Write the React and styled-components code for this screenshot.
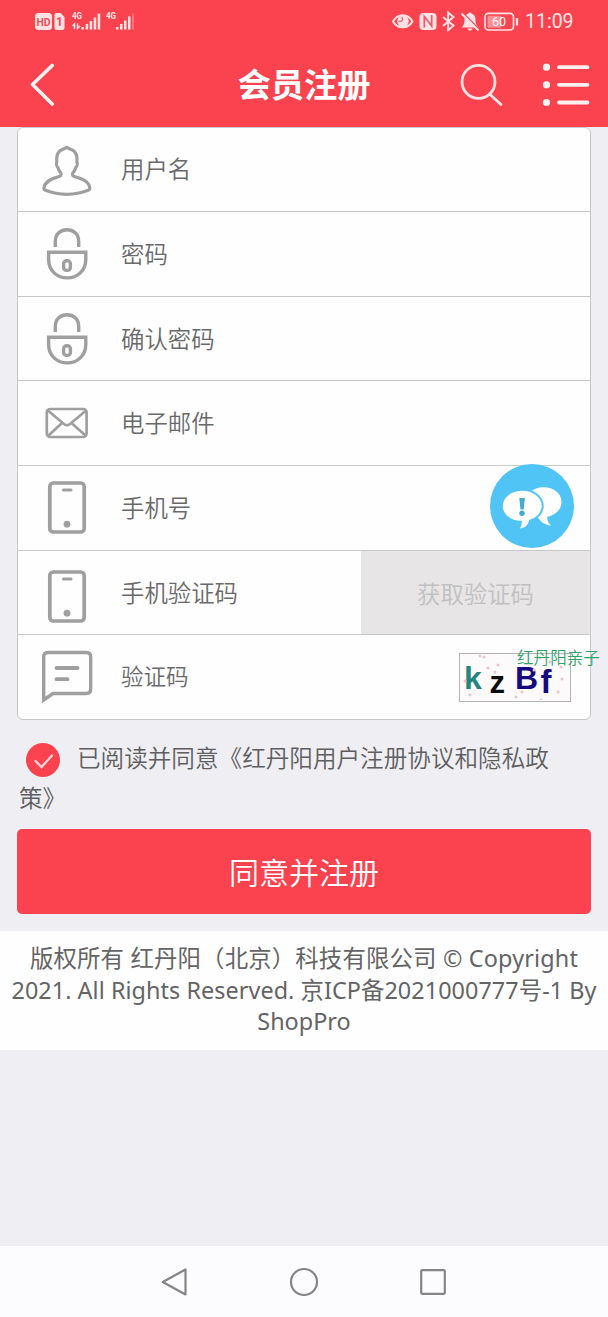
import React, { useState } from 'react';
import styled, { createGlobalStyle } from 'styled-components';

const GlobalStyle = createGlobalStyle`
  * {
    box-sizing: border-box;
  }

  body {
    margin: 0;
    background-color: #efeef3;
    font-family: 'Noto Sans', 'Noto Sans CJK SC', sans-serif;
    color: #5e5e60;
  }

  svg {
    display: block;
    flex-shrink: 0;
  }
`;

const Page = styled.div`
  display: flex;
  flex-direction: column;
  width: 608px;
  height: 1317px;
  overflow: hidden;
`;

const TopArea = styled.div`
  height: 126.5px;
  flex-shrink: 0;
  background-color: #fa434f;
  color: #fff;
`;

const StatusBar = styled.div`
  display: flex;
  justify-content: space-between;
  align-items: center;
  height: 43px;
  padding: 0 34px 2px;
`;

const StatusGroup = styled.div`
  display: flex;
  align-items: center;
`;

const Clock = styled.span`
  width: 49px;
  padding-top: 2px;
  margin-left: 5px;
  font-family: Roboto, sans-serif;
  font-size: 19.5px;
  line-height: 22px;
  color: #ffe3e4;
  white-space: nowrap;
`;

const TitleBar = styled.header`
  display: grid;
  grid-template-columns: 1fr auto 1fr;
  align-items: center;
  height: 83px;
  padding: 0 18px;
`;

const BackButton = styled.button`
  margin: 0;
  padding: 0 0 0 10px;
  border: none;
  background: none;
`;

const Title = styled.h1`
  margin: -4px 0 0;
  font-family: 'Noto Sans CJK SC', sans-serif;
  font-size: 33.3px;
  line-height: 48px;
  font-weight: 700;
`;

const TitleActions = styled.div`
  display: flex;
  justify-content: flex-end;
  align-items: center;
  gap: 39px;
`;

const Form = styled.div`
  display: flex;
  flex-direction: column;
  width: 574px;
  height: 593.5px;
  flex-shrink: 0;
  margin-left: 17px;
  border: 1.5px solid #c9c9cb;
  border-radius: 6px;
  background-color: #fefefe;
  overflow: hidden;
`;

const Row = styled.div`
  display: flex;
  align-items: center;
  flex: 1;
  min-height: 0;
  padding-left: 19px;

  & + & {
    border-top: 1.5px solid #c9c9cb;
  }
`;

const IconBox = styled.div`
  width: 60px;
  margin-right: 24px;
  padding-top: ${props => props.$drop || 0}px;
`;

const Label = styled.span`
  flex: 1;
  padding-bottom: ${props => props.$lift || 2}px;
  font-family: 'Noto Sans CJK SC', sans-serif;
  font-size: ${props => props.$size || 23.4}px;
  line-height: 34px;
  font-weight: 350;
  color: #69696b;
`;

const CodeButton = styled.button`
  align-self: stretch;
  width: 229px;
  padding: 1px 0 0;
  border: none;
  background-color: #e7e5e6;
  color: #c1c0c1;
  font-family: 'Noto Sans CJK SC', sans-serif;
  font-size: 23.4px;
  font-weight: 350;
`;

const Captcha = styled.div`
  display: flex;
  position: relative;
  width: 112px;
  height: 49px;
  margin-right: 19px;
  padding-left: 4px;
  border: 1.5px solid #b5b3b5;
  background-color: #fdfafb;
`;

const CaptchaDots = styled.svg`
  position: absolute;
  top: 0;
  left: 0;
`;

const CaptchaChar = styled.span`
  width: ${props => props.$width}px;
  padding-top: ${props => props.$top}px;
  font-family: 'Liberation Sans', Arial, sans-serif;
  font-size: ${props => props.$size}px;
  line-height: 32px;
  font-weight: 700;
  color: ${props => props.$color};
`;

const Agreement = styled.div`
  height: 109px;
  flex-shrink: 0;
  padding: 17px 19px 0;
  font-family: 'Noto Sans CJK SC', sans-serif;
  font-size: 23.6px;
  line-height: 40px;
  font-weight: 350;
  white-space: nowrap;
`;

const AgreementLine = styled.div`
  display: flex;
  align-items: center;
  height: 40px;
`;

const CheckButton = styled.button`
  margin: 5px 17px 0 7px;
  padding: 0;
  border: none;
  background: none;
`;

const SubmitButton = styled.button`
  width: 574px;
  height: 85px;
  flex-shrink: 0;
  margin-left: 17px;
  padding: 0 0 2px;
  border: none;
  border-radius: 5px;
  background-color: #fa434f;
  color: #fff;
  font-family: 'Noto Sans CJK SC', sans-serif;
  font-size: 30px;
  font-weight: 350;
`;

const Footer = styled.footer`
  height: 118.5px;
  flex-shrink: 0;
  margin-top: 17px;
  padding-top: 12px;
  background-color: #fefefe;
  color: #646466;
  font-size: 23.4px;
  line-height: 31.5px;
  text-align: center;
  white-space: nowrap;
`;

const FooterLine = styled.div`
  height: 31.5px;
  letter-spacing: ${props => props.$spacing || 0}px;
`;

const NavBar = styled.nav`
  display: flex;
  justify-content: center;
  align-items: center;
  gap: 99px;
  height: 71px;
  flex-shrink: 0;
  margin-top: auto;
  background-color: #fcfbfe;
`;

const ChatBubble = styled.div`
  position: absolute;
  top: 464px;
  left: 490px;
`;

const Watermark = styled.div`
  position: absolute;
  top: 648px;
  left: 517px;
  font-family: 'Noto Sans CJK SC', sans-serif;
  font-size: 16.6px;
  line-height: 18px;
  font-weight: 350;
  color: #2fa468;
  white-space: nowrap;
`;

const FieldSvg = ({ children }) => (
  <svg width="60" height="60" viewBox="0 0 60 60" fill="none" stroke="#a09fa0" strokeWidth="3.4">
    {children}
  </svg>
);

const UserIcon = () => (
  <FieldSvg>
    <path
      d="M29.700 8.300c-2 1.800-5 1.700-7.300 4-2.600 2.700-3.100 6-2.600 10.500-1 2 .1 4.700 1.200 5.800.6 2.800 1.500 3.600 3 5.700.6 1.700-.5 2.800-2.500 3.500C15 39.600 8 42 6.900 49c-.2 1.500.3 1.800 1.600 2.300 6.500 2.500 13.500 4 21.200 4s15-1.500 21.500-4c1.300-.5 1.800-.8 1.600-2.300C51.700 42 44.500 39.600 38 37.800c-2-.7-3.100-1.800-2.300-3.500 1.500-2.100 2.400-2.900 3-5.700 1.100-1.100 2.200-3.800 1.200-5.800.5-4.500 0-7.800-2.600-10.500-2.300-2.300-5.600-2.200-7.600-4z"
      strokeLinejoin="round"
      strokeWidth="3.2"
    />
  </FieldSvg>
);

const LockIcon = () => (
  <FieldSvg>
    <path d="M18.300 23v-5.500c0-7.500 5.300-11.700 11.700-11.700s11.700 4.200 11.700 11.700V23" />
    <path d="M11.600 28.200h37.200v7c0 11.500-8.500 18.700-18.600 18.700s-18.600-7.200-18.600-18.700z" />
    <rect x="26.600" y="36.800" width="6.800" height="9.600" rx="3" />
  </FieldSvg>
);

const MailIcon = () => (
  <FieldSvg>
    <rect x="9.800" y="16" width="39.800" height="28" rx="3.500" strokeWidth="2.700" />
    <path d="M11.500 18 27 31c2 1.600 4 1.600 6 0l15.500-13M11.500 42.500 24.500 30.500M48.500 42.500 35 30.500" strokeWidth="2.700" />
  </FieldSvg>
);

const PhoneIcon = () => (
  <FieldSvg>
    <rect x="12.800" y="5" width="34.400" height="49" rx="3.500" strokeWidth="3.700" />
    <path d="M26.500 12h7.500" strokeWidth="3" strokeLinecap="round" />
    <circle cx="30" cy="46.200" r="3.400" fill="#a09fa0" stroke="none" />
  </FieldSvg>
);

const MessageIcon = () => (
  <FieldSvg>
    <path d="M6.700 53V10c0-3 1.500-4.500 4.500-4.500h38c3 0 4.500 1.500 4.500 4.500v32c0 3-1.500 4.500-4.500 4.500H16z" />
    <path d="M19.500 21h21M19.500 32.200h11" strokeWidth="3.800" strokeLinecap="round" />
  </FieldSvg>
);

const SignalIcons = () => (
  <svg width="102" height="24" viewBox="0 0 102 24" fill="#ffe3e4" fontFamily="Roboto, sans-serif" fontWeight="700">
    <rect x="1" y="4" width="17" height="17" rx="3.500" />
    <text x="2.500" y="16.500" fontSize="11" textLength="14" lengthAdjust="spacingAndGlyphs" fill="#f04b57">HD</text>
    <path d="M22.500 4h4l4 4v10.500a2.500 2.500 0 0 1-2.500 2.500h-5.500a2 2 0 0 1-2-2V6a2 2 0 0 1 2-2z" />
    <text x="22" y="17" fontSize="12" fill="#f04b57">1</text>
    <text x="38" y="10.300" fontSize="9" textLength="10" lengthAdjust="spacingAndGlyphs">4G</text>
    <path d="M40.500 20v-5l-2 2M43.500 14.500v5l2.500-2.500" fill="none" stroke="#ffe3e4" strokeWidth="1.500" />
    <path d="M47.500 18h2.500v2.500h-2.500zM51.700 15h2.500v5.500h-2.500zM55.700 12h2.500v8.500h-2.500zM59.700 8.500h2.500v12h-2.500zM63.700 4.500h2.500v16h-2.500z" />
    <text x="72" y="10.300" fontSize="9" textLength="10" lengthAdjust="spacingAndGlyphs">4G</text>
    <path d="M82 18h2.500v2.500h-2.500zM86 15h2.500v5.500h-2.500zM90 11.500h2.500v9h-2.500zM94 7.500h2.500v13h-2.500z" />
    <path d="M98 4.500h2v16h-2z" opacity="0.3" />
  </svg>
);

const DeviceIcons = () => (
  <svg width="129" height="24" viewBox="0 0 129 24" fill="none" stroke="#ffe3e4" strokeWidth="2">
    <path d="M2 12.500C6.500 4 17 4 21.500 12.500 17 20.200 6.500 20.200 2 12.500z" />
    <circle cx="12" cy="12.300" r="5.800" fill="#ffe3e4" stroke="none" />
    <path d="M10.500 8a2.500 2.500 0 1 1-3 4" stroke="#f4636d" strokeWidth="1.300" />
    <rect x="28.500" y="4" width="17" height="17" rx="4" fill="#ffe3e4" stroke="none" />
    <path d="M33.300 18.500V7.500l7.400 9.500V6" stroke="#f05a65" strokeWidth="1.700" />
    <path d="m52 8 10.500 8.500-5.300 4.700V3.500L62.500 8 52 17" strokeWidth="1.900" />
    <path d="M70.500 18.500c2.300-2 3-4 3-7.500 0-4 2-6 4-6.500.3-1.500 2.700-1.500 3 0 2 .5 4 2.500 4 6.500 0 3.500.7 5.500 3 7.500zM76.500 19.500h5c-.5 2.700-4.500 2.700-5 0z" fill="#ffe3e4" stroke="none" />
    <path d="M72.500 4.500 88.500 20.500" stroke="#fa434f" strokeWidth="1.500" />
    <path d="m70.500 4.500 17 17" strokeWidth="1.900" />
    <rect x="94" y="4.300" width="28.500" height="16.700" rx="3.500" strokeWidth="1.700" />
    <rect x="96.500" y="6.700" width="14" height="12" rx="1.500" fill="#fb8e95" stroke="none" />
    <text x="101" y="17" fontSize="12.500" fontFamily="Roboto, sans-serif" fill="#fff" stroke="none">60</text>
    <path d="M126 9v7.500" strokeWidth="2.300" />
  </svg>
);

const ChatIcon = () => (
  <svg width="84" height="84" viewBox="0 0 84 84">
    <circle cx="42" cy="42" r="42" fill="#50c4f5" />
    <path
      d="M53.500 23.300c10.300 0 18 6.200 18 14.700 0 7.200-5.500 13-14.200 14.800-.3 3.200.8 5.700 3.700 8.700-6.500-.7-10.500-3.500-13-8-6.500-2.200-12.500-7.500-12.500-15.200 0-8.600 7.500-15 18-15z"
      fill="#fff"
    />
    <path
      d="M32 25.800c11.500 0 20.700 7 20.700 16.200 0 6.800-5.200 12.500-12.700 14.800-.7 4.500-5 8.500-13.500 9.200 3.300-2.500 4.500-5 4.300-8.200C20 57.500 11.800 50.800 11.800 42c0-9 9-16.200 20.200-16.200z"
      fill="#fff"
      stroke="#50c4f5"
      strokeWidth="2"
    />
    <path d="M29.300 34h5.600l-1.200 11.500h-3.200z" fill="#48a9d0" />
    <circle cx="32" cy="49.300" r="2.700" fill="#48a9d0" />
  </svg>
);

const fields = [
  { label: '用户名', icon: UserIcon },
  { label: '密码', icon: LockIcon },
  { label: '确认密码', icon: LockIcon },
  { label: '电子邮件', icon: MailIcon },
  { label: '手机号', icon: PhoneIcon },
];

// scattered noise behind the captcha letters
const noise = [
  [20, 2], [24, 3], [28, 14], [38, 11], [35, 18], [10, 41], [5, 27], [56, 43],
  [62, 38], [80, 4], [90, 8], [98, 38], [102, 25], [101, 13], [74, 16], [81, 46],
];

function App() {
  const [agreed, setAgreed] = useState(true);

  return (
    <Page>
      <GlobalStyle />
      <TopArea>
        <StatusBar>
          <StatusGroup>
            <SignalIcons />
          </StatusGroup>
          <StatusGroup>
            <DeviceIcons />
            <Clock>11:09</Clock>
          </StatusGroup>
        </StatusBar>
        <TitleBar>
          <BackButton>
            <svg width="28" height="44" viewBox="0 0 28 44" fill="none" stroke="#fff0f0" strokeWidth="3.600" strokeLinecap="round" strokeLinejoin="round">
              <path d="M24.200 2.500 4.500 21.500l19.700 19.500" />
            </svg>
          </BackButton>
          <Title>会员注册</Title>
          <TitleActions>
            <svg width="44" height="44" viewBox="0 0 44 44" fill="none" stroke="#ffe3e4" strokeWidth="2.800" strokeLinecap="round">
              <circle cx="19.500" cy="18.800" r="16.500" />
              <path d="m30.500 31 11.500 10.500" />
            </svg>
            <svg width="48" height="44" viewBox="0 0 48 44" fill="#fff0f0" stroke="#fff0f0" strokeWidth="3.800" strokeLinecap="round">
              <path d="M17 4.200h28.500M17 21.800h28.500M17 39.500h28.500" />
              <g stroke="none">
                <circle cx="4.500" cy="4.200" r="3.600" />
                <circle cx="4.500" cy="21.800" r="3.600" />
                <circle cx="4.500" cy="39.500" r="3.600" />
              </g>
            </svg>
          </TitleActions>
        </TitleBar>
      </TopArea>

      <Form>
        {fields.map(({ label, icon: Icon }) => (
          <Row key={label}>
            <IconBox>
              <Icon />
            </IconBox>
            <Label>{label}</Label>
          </Row>
        ))}
        <Row>
          <IconBox $drop={9}>
            <PhoneIcon />
          </IconBox>
          <Label>手机验证码</Label>
          <CodeButton>获取验证码</CodeButton>
        </Row>
        <Row>
          <IconBox>
            <MessageIcon />
          </IconBox>
          <Label $size={22.5} $lift={5}>验证码</Label>
          <Captcha>
            <CaptchaDots width="109" height="46">
              {noise.map(([x, y]) => (
                <circle key={`${x}-${y}`} cx={x} cy={y} r="1.500" fill="#eac3d0" />
              ))}
            </CaptchaDots>
            <CaptchaChar $width={25.5} $top={8} $size={32} $color="#23877f">k</CaptchaChar>
            <CaptchaChar $width={25.5} $top={13} $size={31} $color="#0b0b0b">z</CaptchaChar>
            <CaptchaChar $width={25.5} $top={8} $size={32} $color="#160a80">B</CaptchaChar>
            <CaptchaChar $width={14} $top={12} $size={33} $color="#160a80">f</CaptchaChar>
          </Captcha>
        </Row>
      </Form>

      <Agreement>
        <AgreementLine>
          <CheckButton onClick={() => setAgreed(!agreed)}>
            <svg width="34" height="34" viewBox="0 0 34 34" fill="none">
              <circle cx="17" cy="17" r="17" fill={agreed ? '#fa434f' : '#c8c8ca'} />
              <path d="m9.500 18 6 6L26 12.500" stroke="#ffd5d8" strokeWidth="2.300" strokeLinecap="round" />
            </svg>
          </CheckButton>
          已阅读并同意《红丹阳用户注册协议和隐私政
        </AgreementLine>
        <AgreementLine>策》</AgreementLine>
      </Agreement>
      <SubmitButton>同意并注册</SubmitButton>

      <Footer>
        <FooterLine $spacing={0.17}>版权所有 红丹阳（北京）科技有限公司 © Copyright</FooterLine>
        <FooterLine $spacing={0.05}>2021. All Rights Reserved. 京ICP备2021000777号-1 By</FooterLine>
        <FooterLine>ShopPro</FooterLine>
      </Footer>

      <NavBar>
        <svg width="30" height="30" viewBox="0 0 30 30" fill="none" stroke="#858487" strokeWidth="2.200" strokeLinejoin="round">
          <path d="M25.500 2.500v25L2.700 15z" />
        </svg>
        <svg width="30" height="30" viewBox="0 0 30 30" fill="none" stroke="#858487" strokeWidth="2.200">
          <circle cx="15" cy="15" r="13" />
        </svg>
        <svg width="30" height="30" viewBox="0 0 30 30" fill="none" stroke="#858487" strokeWidth="2.200">
          <rect x="3.200" y="3.200" width="23.600" height="23.600" rx="1" />
        </svg>
      </NavBar>

      <ChatBubble>
        <ChatIcon />
      </ChatBubble>
      <Watermark>红丹阳亲子</Watermark>
    </Page>
  );
}

export default App;
